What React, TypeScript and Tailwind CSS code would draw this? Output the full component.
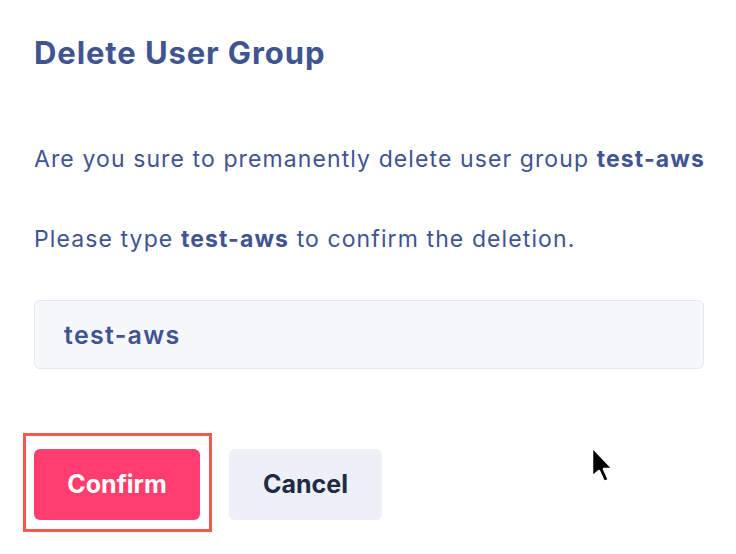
import { useState } from 'react';

/**
 * DeleteUserGroup
 *
 * Confirmation dialog for permanently removing a user group.
 */
function DeleteUserGroup() {
  const groupName = 'test-aws';
  const [typed, setTyped] = useState(groupName);

  return (
    <div className="relative w-[736px] h-[554px] bg-white pl-[34px] pr-[32px] font-['Inter',sans-serif] text-[#3f5491]">
      {/* Title */}
      <h1 className="pt-[35px] text-[31px] leading-[36px] font-bold tracking-[0.9px]">
        Delete User Group
      </h1>

      {/* Body */}
      <p className="mt-[72px] text-[23px] leading-[32px] tracking-[1.1px] whitespace-nowrap">
        Are you sure to premanently delete user group{' '}
        <span className="font-bold">{groupName}</span>
      </p>
      <p className="mt-[48px] text-[23px] leading-[32px] tracking-[1.1px]">
        Please type <span className="font-bold">{groupName}</span> to confirm the deletion.
      </p>

      {/* Input */}
      <input
        value={typed}
        onChange={(e) => setTyped(e.target.value)}
        className="mt-[45px] block w-[670px] h-[69px] rounded-[6px] border border-[#e4e8f1] bg-[#f5f7fb] px-[29px] text-[25px] font-semibold tracking-[1.3px] text-[#3f5491] outline-none"
      />

      {/* Actions */}
      <div className="mt-[80px] flex gap-[29px]">
        <div className="relative">
          <button className="h-[71px] w-[166px] rounded-[6px] bg-[#ff3d6e] text-[25px] font-bold text-white">
            Confirm
          </button>
          <span className="pointer-events-none absolute -left-[11px] -top-[16px] -right-[12px] -bottom-[12px] border-[3px] border-[#f35a4b]" />
        </div>
        <button className="h-[71px] w-[153px] rounded-[6px] bg-[#edf0f7] text-[25px] font-bold text-[#1f2a44]">
          Cancel
        </button>
      </div>

      {/* Mouse pointer */}
      <svg
        className="absolute left-[588px] top-[444px]"
        width="30"
        height="44"
        viewBox="0 0 30 44"
      >
        <path
          d="M4 3 L4 33 L11 27 L16 38 L21 36 L16 25 L25 25 Z"
          fill="#000"
          stroke="#fff"
          strokeWidth="2.5"
          strokeLinejoin="round"
        />
      </svg>
    </div>
  );
}

export default function App() {
  return <DeleteUserGroup />;
}
